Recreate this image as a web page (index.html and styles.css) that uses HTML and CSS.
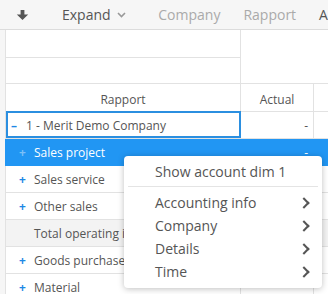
FILE: index.html
```html
<!DOCTYPE html>
<html lang="en">
<head>
  <meta charset="UTF-8" />
  <title>Rapport</title>
  <link rel="stylesheet" href="styles.css">
</head>
<body>
  <div class="toolbar">
    <span class="tool-icon">
      <svg width="13" height="10" viewBox="0 0 13 10"><path d="M4.6 0h3.8v4.4h3.8L6.5 10 0.8 4.4h3.8z" fill="#555"/></svg>
    </span>
    <span class="tool dark expand">Expand
      <svg class="caret" width="9" height="6" viewBox="0 0 9 6"><path d="M1 1l3.5 3.5L8 1" stroke="#999" stroke-width="1.6" fill="none"/></svg>
    </span>
    <span class="tool">Company</span>
    <span class="tool">Rapport</span>
    <span class="tool dark">Actual</span>
  </div>

  <div class="grid">
    <table>
      <colgroup>
        <col class="c1"><col class="c2"><col class="c3">
      </colgroup>
      <thead>
        <tr class="h1"><th></th><th colspan="2" rowspan="2"></th></tr>
        <tr class="h2"><th></th></tr>
        <tr class="h3"><th>Rapport</th><th>Actual</th><th></th></tr>
      </thead>
      <tbody>
        <tr class="focus"><td class="name"><span class="minus">–</span>1 - Merit Demo Company</td><td class="num">-</td><td></td></tr>
        <tr class="selected"><td class="name sub"><span class="plus">+</span>Sales project</td><td class="num">-</td><td></td></tr>
        <tr><td class="name sub"><span class="plus">+</span>Sales service</td><td class="num"></td><td></td></tr>
        <tr><td class="name sub"><span class="plus">+</span>Other sales</td><td class="num"></td><td></td></tr>
        <tr class="total"><td class="name sub"><span class="plus"></span>Total operating income</td><td class="num"></td><td></td></tr>
        <tr><td class="name sub"><span class="plus">+</span>Goods purchase</td><td class="num"></td><td></td></tr>
        <tr><td class="name sub"><span class="plus">+</span>Material</td><td class="num"></td><td></td></tr>
      </tbody>
    </table>
  </div>

  <div class="menu">
    <div class="menu-item">Show account dim 1</div>
    <div class="menu-sep"></div>
    <div class="menu-item">Accounting info <span class="chev"></span></div>
    <div class="menu-item">Company <span class="chev"></span></div>
    <div class="menu-item">Details <span class="chev"></span></div>
    <div class="menu-item">Time <span class="chev"></span></div>
  </div>
</body>
</html>
```

FILE: styles.css
```css
body {
  margin: 0;
  width: 328px;
  height: 294px;
  overflow: hidden;
  font-family: "Open Sans", Arial, sans-serif;
  background-color: #f6f6f6;
  color: #555;
  position: relative;
}

.toolbar {
  height: 29px;
  display: flex;
  align-items: center;
  white-space: nowrap;
  overflow: hidden;
  border-bottom: 1px solid #dcdcdc;
  font-size: 14px;
}

.tool-icon {
  width: 13px;
  margin-left: 16px;
  margin-right: 33px;
  display: flex;
}

.tool {
  color: #aaa;
  margin-right: 23px;
  flex-shrink: 0;
}

.tool.dark {
  color: #555;
}

.tool.expand {
  margin-right: 32px;
}

.caret {
  margin-left: 3px;
  vertical-align: 2px;
}

.grid {
  margin-left: 5px;
  width: 323px;
  overflow: hidden;
}

table {
  border-collapse: collapse;
  table-layout: fixed;
  width: 340px;
  background-color: white;
  font-size: 12px;
}

.c1 { width: 235px; }
.c2 { width: 73px; }
.c3 { width: 32px; }

th, td {
  border: 1px solid #e2e2e2;
  padding: 2px 5px 0;
  white-space: nowrap;
  overflow: hidden;
}

th {
  font-weight: normal;
  text-align: center;
  color: #555;
}

tr:first-child th {
  border-top: none;
}

.h1 { height: 27px; }
.h2 { height: 26px; }
.h3 { height: 28px; }

.h3 th {
  padding-top: 5px;
}

tbody tr {
  height: 27px;
}

.name {
  padding-left: 5px;
}

.num {
  text-align: right;
}

.minus {
  display: inline-block;
  width: 15px;
  color: #1e88e5;
  font-weight: bold;
}

.sub {
  padding-left: 13px;
}

.plus {
  display: inline-block;
  width: 15px;
  color: #1e88e5;
  font-weight: bold;
}

.focus .name {
  outline: 2px solid #2b8fe0;
  outline-offset: -2px;
}

.selected td {
  background-color: #2196f3;
  color: white;
  border-color: #2196f3;
}

.selected .plus {
  color: #7cc0f7;
}

.total td {
  background-color: #f3f3f3;
  border-top: 1px solid #c4c4c4;
}

.menu {
  position: absolute;
  left: 124px;
  top: 156px;
  width: 198px;
  padding: 4px 0 5px;
  background-color: white;
  border-radius: 4px;
  box-shadow: 0 1px 6px rgba(0,0,0,0.25);
  font-size: 14px;
  color: #555;
}

.menu-item {
  display: flex;
  justify-content: space-between;
  align-items: center;
  height: 23px;
  padding: 0 14px 0 31px;
}

.menu-sep {
  height: 1px;
  background-color: #e4e4e4;
  margin: 3px 4px 4px;
}

.chev {
  width: 6px;
  height: 6px;
  border-right: 2.5px solid #555;
  border-top: 2.5px solid #555;
  transform: rotate(45deg);
}
```
